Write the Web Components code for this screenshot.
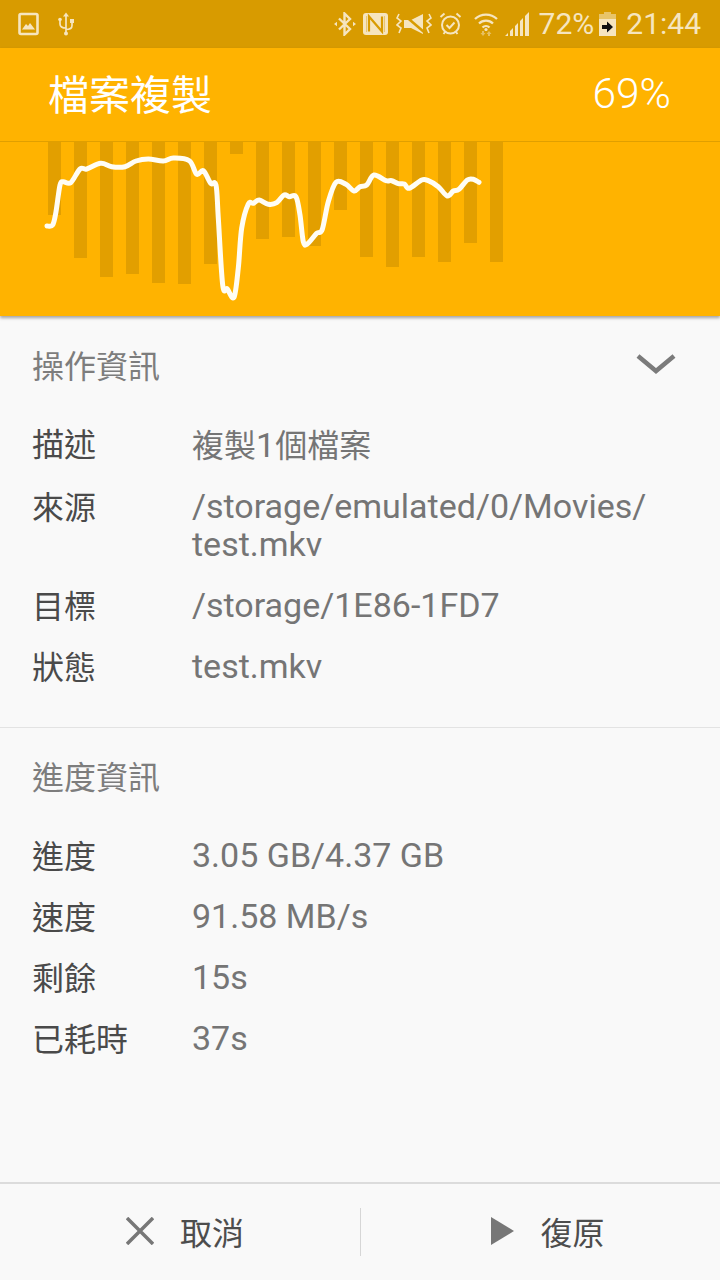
<!DOCTYPE html>
<html lang="zh-Hant">
<head>
<meta charset="utf-8">
<title>檔案複製</title>
<style>
    html, body {
        margin: 0;
        padding: 0;
    }
    body {
        width: 720px;
        height: 1280px;
        overflow: hidden;
        display: flex;
        flex-direction: column;
        background: #f9f9f9;
        font-family: Roboto, "Noto Sans CJK TC", sans-serif;
    }
    action-bar {
        margin-top: auto;
    }
    /* the CJK glyphs run smaller than the latin ones in this screen */
    .cjk {
        font-family: "Noto Sans CJK TC", sans-serif;
        font-size: 32px;
    }
</style>
</head>
<body>
<status-bar></status-bar>
<copy-header title="檔案複製" percent="69%"></copy-header>
<info-section title="操作資訊" collapsible style="--section-top: 23px; --section-bottom: 31px; --head-gap: 23px;">
    <info-row label="描述"><span class="cjk">複製</span>1<span class="cjk">個檔案</span></info-row>
    <info-row label="來源">/storage/emulated/0/Movies/<br>test.mkv</info-row>
    <info-row label="目標">/storage/1E86-1FD7</info-row>
    <info-row label="狀態">test.mkv</info-row>
</info-section>
<info-section title="進度資訊" style="--section-top: 22px; --section-bottom: 0px; --head-gap: 24px;" borderless>
    <info-row label="進度">3.05 GB/4.37 GB</info-row>
    <info-row label="速度">91.58 MB/s</info-row>
    <info-row label="剩餘">15s</info-row>
    <info-row label="已耗時">37s</info-row>
</info-section>
<action-bar></action-bar>

<script>
class StatusBar extends HTMLElement {
    constructor() {
        super();
        this.attachShadow({ mode: 'open' });
        this.shadowRoot.innerHTML = `
            <style>
                :host {
                    display: flex;
                    align-items: center;
                    height: 48px;
                    padding: 0 19px 0 18px;
                    background: #d89b00;
                    color: #f6e5bf;
                    font-size: 30px;
                    flex: none;
                }
                svg {
                    display: block;
                    flex: none;
                    fill: none;
                    stroke: currentColor;
                }
                .right {
                    margin-left: auto;
                    display: flex;
                    align-items: center;
                }
                .txt {
                    line-height: 48px;
                    white-space: nowrap;
                }
            </style>
            <svg width="22" height="24" viewBox="0 0 22 24" stroke-width="2.6">
                <rect x="1.5" y="2" width="18" height="20" rx="1.5"/>
                <path d="M4 17.500l4-5.500 2 2 2-3 5 6.500z" fill="currentColor" stroke="none"/>
            </svg>
            <svg width="18" height="24" viewBox="0 0 18 24" stroke-width="1.7" style="margin-left:17px">
                <path d="M9 3v18M9 16c-4 0-6-1.500-6-4V9M9 17.500c4 0 6-1.500 6-4V10"/>
                <path d="M9 0.500l3 4H6z" fill="currentColor" stroke="none"/>
                <circle cx="3" cy="7.500" r="1.800" fill="currentColor" stroke="none"/>
                <rect x="13" y="7" width="4" height="4" fill="currentColor" stroke="none"/>
                <circle cx="9" cy="21.500" r="2" fill="currentColor" stroke="none"/>
            </svg>
            <div class="right">
                <svg width="24" height="24" viewBox="0 0 24 24" stroke-width="2.4">
                    <path d="M6 6.500l11 10.500-5.500 5.500V1.500l5.500 5.500L6 17.500"/>
                    <path d="M1 12l3-2.200v4.400zM23 12l-3-2.200v4.400z" fill="currentColor" stroke="none"/>
                </svg>
                <svg width="25" height="24" viewBox="0 0 25 24" style="margin-left:6px">
                    <rect x="0" y="1" width="25" height="22" rx="3" fill="currentColor" stroke="none"/>
                    <path d="M6 19.500V4.500l13 15V4.500" stroke="#d89b00" stroke-width="2.200"/>
                    <path d="M3.500 20V4M21.500 20V4" stroke="#d89b00" stroke-width="0.800" opacity=".5"/>
                </svg>
                <svg width="36" height="24" viewBox="0 0 36 24" style="margin-left:8px" stroke-width="1.600">
                    <path d="M3 2l-2 4 4 3-4 4 4 3-2 5"/>
                    <path d="M33 2l2 4-4 3 4 4-4 3 2 5"/>
                    <path d="M8 8h7l12-6v20l-12-6H8z" fill="currentColor" stroke="none"/>
                    <path d="M7 2l21 18" stroke="#d89b00" stroke-width="2.500"/>
                </svg>
                <svg width="23" height="24" viewBox="0 0 23 24" style="margin-left:7px" stroke-width="2">
                    <circle cx="11.500" cy="13" r="8.500"/>
                    <path d="M7.500 13l3 3 5-5.500M1.500 5l4-3.500M21.500 5l-4-3.500M4.500 22l2-2.500M18.500 22l-2-2.500"/>
                </svg>
                <svg width="24" height="24" viewBox="0 0 24 24" style="margin-left:12px" stroke-width="2.300">
                    <path d="M1 7a16 16 0 0 1 22 0M5 11.500a10 10 0 0 1 14 0M8.500 15.500a5 5 0 0 1 7 0"/>
                    <circle cx="12" cy="17.500" r="1.600" fill="currentColor" stroke="none"/>
                    <path d="M9 24l-2.500-3H8v-2h2v2h1.500zM15 19l2.500 3H16v2h-2v-2h-1.500z" fill="currentColor" stroke="none" opacity=".5"/>
                </svg>
                <svg width="24" height="24" viewBox="0 0 24 24" style="margin-left:7px">
                    <path fill="currentColor" stroke="none" d="M0 24l3-3v3zM5 24v-5l3-3v8zM10 24V14l3-3v13zM15 24V9l3-3v18zM20 24V4l4-4v24z"/>
                </svg>
                <span class="txt" style="margin-left:10px">72%</span>
                <svg width="17" height="24" viewBox="0 0 17 24" style="margin-left:5px">
                    <path fill="currentColor" stroke="none" opacity=".55" d="M5 0h7v2h5v6H0V2h5z"/>
                    <rect x="0" y="7" width="17" height="17" fill="currentColor" stroke="none"/>
                    <path fill="#111" stroke="none" d="M3 13h5v-3.500l6 5.500-6 5.500V17H3z"/>
                </svg>
                <span class="txt" style="margin-left:10px">21:44</span>
            </div>
        `;
    }
}

class CopyHeader extends HTMLElement {
    constructor() {
        super();
        this.attachShadow({ mode: 'open' });
    }

    connectedCallback() {
        this.render();
    }

    render() {
        this.shadowRoot.innerHTML = `
            <style>
                :host {
                    display: block;
                    flex: none;
                    background: #ffb300;
                    box-shadow: 0 2px 3px rgba(0, 0, 0, 0.35);
                    position: relative;
                    height: 268px;
                }
                .top {
                    display: flex;
                    align-items: center;
                    justify-content: space-between;
                    box-sizing: border-box;
                    height: 94px;
                    padding: 0 49px 2px 48px;
                    border-bottom: 1px solid #e09f00;
                    color: #fff;
                }
                .title {
                    font: 41px/50px "Noto Sans CJK TC", sans-serif;
                    margin-top: -3px;
                }
                .pct {
                    font: 300 42.500px/50px Roboto, sans-serif;
                }
            </style>
            <div class="top">
                <span class="title">${this.getAttribute('title')}</span>
                <span class="pct">${this.getAttribute('percent')}</span>
            </div>
            <speed-chart></speed-chart>
        `;
    }
}

class SpeedChart extends HTMLElement {
    constructor() {
        super();
        this.attachShadow({ mode: 'open' });
        const bottoms = [215, 258, 277, 274, 283, 284, 264, 154, 239, 237, 246, 210, 257, 267, 257, 262, 243, 262];
        const bars = bottoms.map((b, i) =>
            `<rect x="${48 + i * 26}" y="142" width="13" height="${b - 142}"/>`).join('');
        const pts = [
            [47, 226], [52.7, 225], [56, 211.7], [60, 185], [63.3, 181.7], [70.7, 182.7], [80, 169], [86.7, 169],
            [100.7, 163.3], [111.7, 166.7], [125, 166.7], [136, 161], [148.3, 159], [163.3, 161], [173.3, 158],
            [189.3, 160.7], [196.7, 174.3], [203.3, 170.7], [210.7, 183.3], [216, 185], [218.3, 218], [222.7, 285],
            [227.3, 289], [234, 297.3], [238.3, 268], [241.7, 228], [248.3, 204], [253.3, 203.3], [259.3, 200],
            [268.3, 204.3], [276.7, 202.7], [284, 195], [289.3, 196.7], [296, 196.7], [300, 215], [303.3, 241.7],
            [307.3, 244], [316.7, 233.3], [322.3, 229.3], [328.3, 201.7], [336, 182.3], [346, 184.3], [354, 191],
            [360, 186.7], [366.7, 185], [374, 175], [386, 180.7], [391.7, 180.7], [398.3, 183.7], [404.3, 184],
            [409.3, 188.3], [421.7, 180], [428.3, 180.7], [438.3, 186.7], [447.3, 196], [453.3, 191], [459, 189.3],
            [467.3, 180], [473.3, 179.3], [479, 182.3],
        ];
        this.shadowRoot.innerHTML = `
            <style>
                :host {
                    display: block;
                }
                svg {
                    display: block;
                }
            </style>
            <svg width="720" height="174" viewBox="0 142 720 174">
                <g fill="#e29f00">${bars}</g>
                <path d="${this.smooth(pts)}" fill="none" stroke="#fffdf5"
                    stroke-width="5" stroke-linejoin="round" stroke-linecap="round"/>
            </svg>
        `;
    }

    // catmull-rom through the samples, the app draws a rounded line
    smooth(pts) {
        let d = `M${pts[0][0]} ${pts[0][1]}`;
        for (let i = 0; i < pts.length - 1; i++) {
            const p0 = pts[Math.max(i - 1, 0)];
            const p1 = pts[i];
            const p2 = pts[i + 1];
            const p3 = pts[Math.min(i + 2, pts.length - 1)];
            const c1x = p1[0] + (p2[0] - p0[0]) / 6;
            const c1y = p1[1] + (p2[1] - p0[1]) / 6;
            const c2x = p2[0] - (p3[0] - p1[0]) / 6;
            const c2y = p2[1] - (p3[1] - p1[1]) / 6;
            d += `C${c1x.toFixed(1)} ${c1y.toFixed(1)} ${c2x.toFixed(1)} ${c2y.toFixed(1)} ${p2[0]} ${p2[1]}`;
        }
        return d;
    }
}

class InfoSection extends HTMLElement {
    constructor() {
        super();
        this.attachShadow({ mode: 'open' });
    }

    connectedCallback() {
        const chevron = this.hasAttribute('collapsible') ? `
            <svg width="40" height="20" viewBox="0 0 40 20" fill="none" stroke="#7b7b7b" stroke-width="4.500">
                <path d="M2 2l18 15L38 2"/>
            </svg>` : '';
        this.shadowRoot.innerHTML = `
            <style>
                :host {
                    display: block;
                    flex: none;
                    padding: var(--section-top) 44px var(--section-bottom) 32px;
                    border-bottom: 1px solid #e3e3e3;
                }
                :host([borderless]) {
                    border-bottom: none;
                }
                .head {
                    display: flex;
                    align-items: center;
                    justify-content: space-between;
                    height: 50px;
                    margin-bottom: var(--head-gap);
                    font: 32px/50px "Noto Sans CJK TC", sans-serif;
                    color: #7d7d7d;
                }
            </style>
            <div class="head"><span>${this.getAttribute('title')}</span>${chevron}</div>
            <slot></slot>
        `;
    }
}

class InfoRow extends HTMLElement {
    constructor() {
        super();
        this.attachShadow({ mode: 'open' });
    }

    connectedCallback() {
        this.shadowRoot.innerHTML = `
            <style>
                :host {
                    display: grid;
                    grid-template-columns: 160px 1fr;
                    padding: 11.500px 0;
                    line-height: 38px;
                }
                .label {
                    font: 32px/38px "Noto Sans CJK TC", sans-serif;
                    color: #4a4a4a;
                    margin-top: -1px;
                }
                .value {
                    font: 34px/38px Roboto, "Noto Sans CJK TC", sans-serif;
                    color: #757575;
                }
            </style>
            <div class="label">${this.getAttribute('label')}</div>
            <div class="value"><slot></slot></div>
        `;
    }
}

class ActionBar extends HTMLElement {
    constructor() {
        super();
        this.attachShadow({ mode: 'open' });
        this.shadowRoot.innerHTML = `
            <style>
                :host {
                    display: grid;
                    grid-template-columns: 1fr 1fr;
                    align-items: center;
                    height: 96px;
                    flex: none;
                    border-top: 2px solid #dcdcdc;
                    font: 32px/48px "Noto Sans CJK TC", sans-serif;
                    color: #4d4d4d;
                }
                .btn {
                    display: flex;
                    align-items: center;
                    justify-content: center;
                    height: 48px;
                    gap: 26px;
                }
                .btn + .btn {
                    border-left: 1px solid #d6d6d6;
                }
                .btn span {
                    margin-top: -2px;
                }
                svg {
                    display: block;
                    margin-top: -2px;
                }
            </style>
            <div class="btn" style="padding-left:10px">
                <svg width="28" height="28" viewBox="0 0 28 28" fill="none" stroke="#777" stroke-width="3.500">
                    <path d="M1 1l26 26M27 1L1 27"/>
                </svg>
                <span>取消</span>
            </div>
            <div class="btn" style="padding-left:15px">
                <svg width="23" height="28" viewBox="0 0 23 28"><path d="M0 0l23 14L0 28z" fill="#777"/></svg>
                <span>復原</span>
            </div>
        `;
    }
}

customElements.define('status-bar', StatusBar);
customElements.define('speed-chart', SpeedChart);
customElements.define('copy-header', CopyHeader);
customElements.define('info-section', InfoSection);
customElements.define('info-row', InfoRow);
customElements.define('action-bar', ActionBar);
</script>
</body>
</html>
